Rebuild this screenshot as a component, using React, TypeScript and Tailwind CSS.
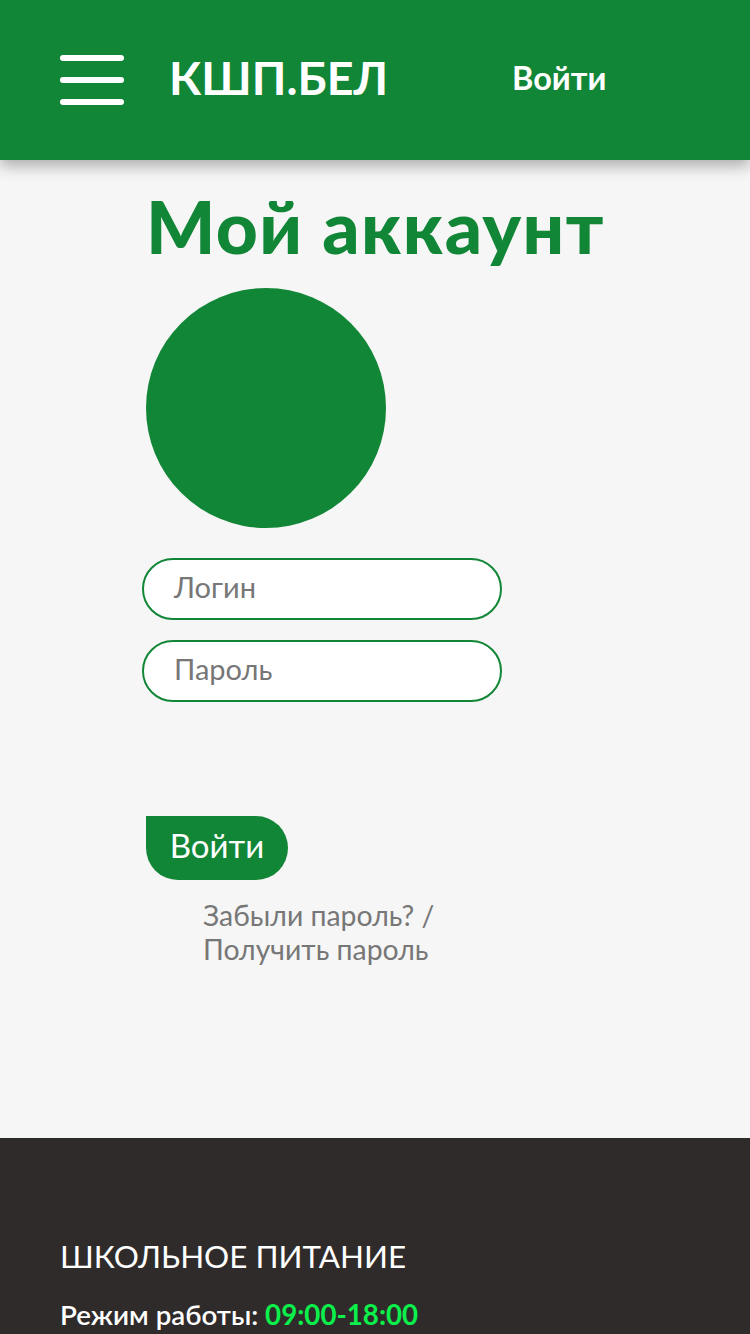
const FONT = "font-['Lato','Noto_Sans',sans-serif]";

function Field({ placeholder, indent }: { placeholder: string; indent: string }) {
  return (
    <div className={`-ml-1 flex h-[62px] w-[360px] items-center rounded-[31px] border-2 border-[#128637] bg-white pb-1 ${indent} text-[29px] text-[#777777]`}>
      {placeholder}
    </div>
  );
}

export default function App() {
  return (
    <div className={`${FONT} h-[1334px] overflow-hidden bg-[#f6f6f6]`}>
      <header className="flex h-[160px] items-center bg-[#128637] pl-[60px] text-white shadow-[0_6px_14px_rgba(0,0,0,0.3)]">
        <div className="flex w-[64px] flex-col gap-4">
          <span className="h-1.5 rounded-full bg-white" />
          <span className="h-1.5 rounded-full bg-white" />
          <span className="h-1.5 rounded-full bg-white" />
        </div>
        <div className="mb-1 ml-[45px] w-[343px] text-[46.5px] font-bold">КШП.БЕЛ</div>
        <div className="mb-1 text-[32.5px] font-bold">Войти</div>
      </header>

      <main className="flex h-[978px] flex-col pl-[146px]">
        <h1 className="mt-[20px] h-[108px] text-[73px] leading-[92px] font-black tracking-[1.4px] text-[#128637]">Мой аккаунт</h1>
        <div className="h-[240px] w-[240px] rounded-full bg-[#128637]" />
        <div className="mt-[30px] flex flex-col gap-5">
          <Field placeholder="Логин" indent="pl-[30px]" />
          <Field placeholder="Пароль" indent="pl-[30px]" />
        </div>
        <button className="mt-[114px] h-16 w-[142px] rounded-[32px] rounded-tl-none bg-[#128637] pb-1 text-[33px] text-white">Войти</button>
        <p className="mt-[18px] ml-[57px] w-[260px] text-[28.4px] leading-[34px] text-[#777777]">Забыли пароль? / Получить пароль</p>
      </main>

      <footer className="h-[196px] bg-[#2f2b2a] pt-[98px] pl-[60px] text-white">
        <div className="text-[31.4px] leading-[40px]">ШКОЛЬНОЕ ПИТАНИЕ</div>
        <div className="mt-[19px] text-[27.7px] leading-[40px] font-semibold">
          Режим работы: <span className="font-bold text-[#0bf04a]">09:00-18:00</span>
        </div>
      </footer>
    </div>
  );
}
